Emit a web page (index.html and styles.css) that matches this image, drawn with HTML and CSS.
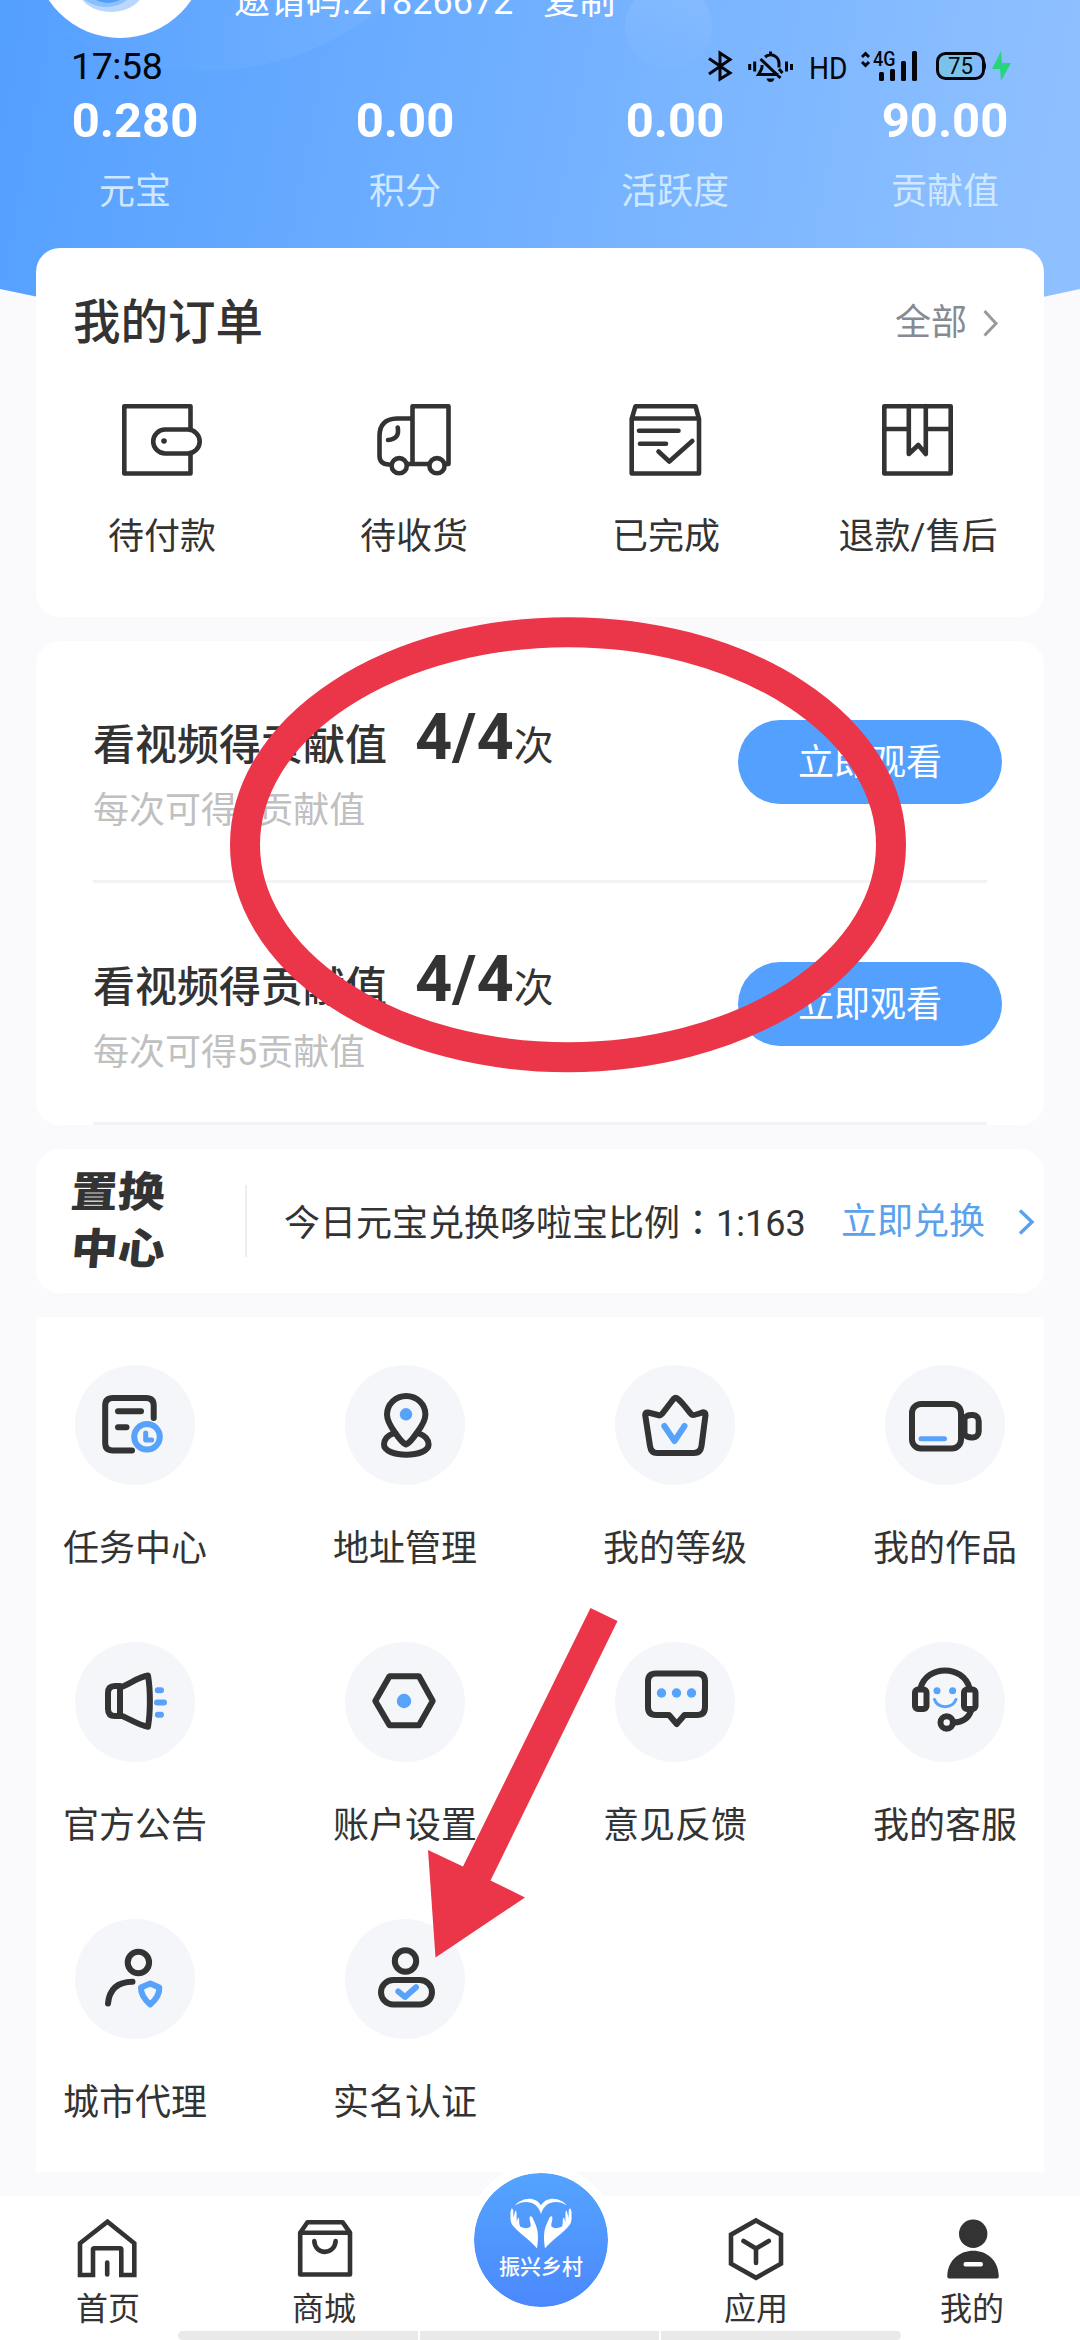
FILE: index.html
```html
<!DOCTYPE html>
<html lang="zh-CN">
<head>
<meta charset="utf-8">
<title>我的</title>
<link rel="stylesheet" href="styles.css">
</head>
<body>
<div class="page">
  <svg class="header-bg" viewBox="0 0 1080 360" aria-hidden="true">
    <defs>
      <linearGradient id="sky" x1="0" y1="0" x2="1" y2="0.06">
        <stop offset="0" stop-color="#54a0ff"/><stop offset="1" stop-color="#8ec0ff"/>
      </linearGradient>
      <linearGradient id="haze" x1="0" y1="0" x2="1" y2="0">
        <stop offset="0.2" stop-color="#fff" stop-opacity="0"/><stop offset="1" stop-color="#fff" stop-opacity="0.08"/>
      </linearGradient>
      <linearGradient id="bubble" x1="0" y1="0" x2="0" y2="1">
        <stop offset="0" stop-color="#fff" stop-opacity="0.1"/><stop offset="1" stop-color="#fff" stop-opacity="0.01"/>
      </linearGradient>
    </defs>
    <path fill="url(#sky)" d="M0 0H1080V289Q540 409 0 289Z"/>
    <circle fill="url(#haze)" cx="203" cy="-213" r="284"/>
    <circle fill="url(#bubble)" cx="668.5" cy="27" r="43.5"/>
    <circle fill="#fff" cx="120" cy="-48" r="86"/>
    <ellipse fill="#b9d8fc" cx="111" cy="-12" rx="33" ry="24"/>
    <ellipse fill="#8cc0fc" cx="106" cy="-15" rx="29" ry="22"/>
    <ellipse fill="#549ff6" cx="108" cy="-16" rx="22" ry="19"/>
  </svg>

  <div class="status-bar">
    <span class="clock">17:58</span>
    <svg class="status-icons" width="310" height="40" viewBox="705 46 310 40">
      <path class="st" d="M709 58.5L730 73L720 79V53L730 59.5L709 74"/>
      <g class="st">
        <path d="M749.7 64v6M754.7 61.500v10M786.500 61.500v10M791.500 64v6M770.500 51.500v3M765 57q4-3.500 9-1.500q5 2.500 5 8v4M762 65v2q0 2-3.500 7.500h20M760.500 59l20 19M779 69l3.500 4"/>
      </g>
      <path d="M766.500 78.500h8q-1 3.500-4 3.500t-4-3.500z"/>
      <text x="809" y="78.500" font-size="32" textLength="38.500" lengthAdjust="spacingAndGlyphs">HD</text>
      <path class="st" d="M862 57l3.500-3.500L869 57M862 62l3.500 3.500L869 62"/>
      <text x="873" y="66" font-size="20" font-weight="500" textLength="22.500" lengthAdjust="spacingAndGlyphs">4G</text>
      <rect x="879" y="72" width="5" height="9" rx="1.500"/><rect x="890" y="69" width="5" height="12" rx="1.500"/>
      <rect x="901" y="61" width="5" height="20" rx="1.500"/><rect x="912" y="51" width="5" height="30" rx="1.500"/>
      <rect x="937.500" y="53.500" width="46" height="25" rx="8" fill="#83baff"/>
      <path fill="#7bc2ea" d="M945 53.500h29v25h-29q-7 0-7-7v-11q0-7 7-7z"/>
      <rect class="st" x="937.500" y="53.500" width="46" height="25" rx="8"/>
      <path d="M984 61q2 1 2 5t-2 5z"/>
      <text x="948" y="74" font-size="23.500" textLength="25" lengthAdjust="spacingAndGlyphs">75</text>
      <path fill="#2ad47f" d="M1001 51L992 69h8l1 12L1011 63h-9z"/>
    </svg>
  </div>

  <header class="header">
    <div class="invite"><span>邀请码.21826672</span><span>复制</span></div>
    <div class="stats">
      <div class="stat"><b>0.280</b><span>元宝</span></div>
      <div class="stat"><b>0.00</b><span>积分</span></div>
      <div class="stat"><b>0.00</b><span>活跃度</span></div>
      <div class="stat"><b>90.00</b><span>贡献值</span></div>
    </div>
  </header>

  <main class="content">
    <section class="card orders">
      <div class="orders-head">
        <h2>我的订单</h2>
        <a class="all">全部<svg width="18" height="30" viewBox="981 306 18 30"><path d="M984.500 309L996 321.500L984.500 333.500"/></svg></a>
      </div>
      <div class="orders-list">
        <div class="order">
          <svg class="ico thin" viewBox="120 398 84 84"><path d="M190.500 429V406.200H124.300V473.500H190.500V454"/><rect x="153.200" y="429.500" width="46.500" height="24" rx="12"/><circle class="fill" cx="164" cy="441" r="2.800"/></svg>
          <span>待付款</span>
        </div>
        <div class="order">
          <svg class="ico thin" viewBox="372 398 84 84"><path d="M412.500 463V406.200H448.500V464H446M412.500 418.500H397Q379.500 419 379.500 436V456Q379.500 464 389 464.500M408.500 464H428M397.700 427.500Q400 439 388 440"/><circle cx="399.200" cy="465.700" r="7.600"/><circle cx="437" cy="465.700" r="7.600"/></svg>
          <span>待收货</span>
        </div>
        <div class="order">
          <svg class="ico thin" viewBox="624 398 84 84"><path d="M631.700 419L635.500 406.200H695.500L699 419M631.700 418.500H699V473.500H631.700ZM639 430.700H678.500M640 443.700H666M658.500 451.500L669.300 461.500L692.300 441"/></svg>
          <span>已完成</span>
        </div>
        <div class="order">
          <svg class="ico thin" viewBox="876 398 84 84"><path d="M884.300 406.200H950.700V473.500H884.300ZM884.300 429H908.800M925.800 429H950.700M908.800 406V454L918.300 445L925.800 454V406"/></svg>
          <span>退款/售后</span>
        </div>
      </div>
    </section>

    <section class="card videos">
      <div class="video">
        <div class="video-text">
          <p class="video-title">看视频得贡献值<b>4/4</b><span>次</span></p>
          <p class="video-sub">每次可得5贡献值</p>
        </div>
        <button class="watch">立即观看</button>
      </div>
      <div class="video">
        <div class="video-text">
          <p class="video-title">看视频得贡献值<b>4/4</b><span>次</span></p>
          <p class="video-sub">每次可得5贡献值</p>
        </div>
        <button class="watch">立即观看</button>
      </div>
    </section>

    <section class="card exchange">
      <div class="exchange-logo"><span>置换</span><span>中心</span></div>
      <p class="rate">今日元宝兑换哆啦宝比例<span class="colon" lang="zh-TW">：</span>1:163</p>
      <a class="swap">立即兑换<svg width="20" height="30" viewBox="1016 1207 20 30"><path d="M1020 1210.500L1032 1222L1020 1233.500"/></svg></a>
    </section>

    <section class="services">
      <div class="service">
        <div class="disc"><svg class="ico" viewBox="75 1365 120 120"><path d="M132 1450.500H113Q105.200 1450.500 105.200 1443V1405.500Q105.200 1398 113 1398H146Q153.700 1398 153.700 1405.500V1418M118 1411.300H141M118 1427.200H126.500"/><circle class="blue" cx="147" cy="1436.800" r="12.800"/><path class="blue mid" d="M145.700 1433V1440H151.700"/></svg></div>
        <span>任务中心</span>
      </div>
      <div class="service">
        <div class="disc"><svg class="ico" viewBox="345 1365 120 120"><path d="M406 1444.500Q402 1443 395 1432.500Q387 1421.500 387 1414.500A19.200 18.500 0 0 1 425.400 1414.500Q425.400 1421.500 417 1432.500Q410 1443 406 1444.500ZM393 1433.500Q384 1437 384 1444.500C384 1458 428.600 1458 428.600 1444.500Q428.600 1437 419 1433.500"/><circle class="bluefill" cx="406" cy="1414.300" r="6.200"/></svg></div>
        <span>地址管理</span>
      </div>
      <div class="service">
        <div class="disc"><svg class="ico" viewBox="615 1365 120 120"><path d="M673.500 1399Q675.700 1397 678 1399C684 1404 688 1411 692 1415Q693 1416 703 1412.300Q705.500 1412 705.500 1415L701.500 1446Q700.500 1453 694 1453H657Q651 1453 650 1446L645.200 1415Q645 1412 648 1412.500L658 1415Q660 1416 662 1414Z"/><path class="blue" d="M664.300 1426L674.500 1441L684.500 1426"/></svg></div>
        <span>我的等级</span>
      </div>
      <div class="service">
        <div class="disc"><svg class="ico" viewBox="885 1365 120 120"><rect x="912" y="1404" width="49" height="44.500" rx="9"/><path d="M964.500 1418C968 1413.500 978.700 1413.500 978.700 1421V1431.500C978.700 1439.500 968 1438.500 964.500 1434.500Z"/><path class="blue mid" d="M921 1438.700H944.500"/></svg></div>
        <span>我的作品</span>
      </div>
      <div class="service">
        <div class="disc"><svg class="ico" viewBox="75 1642 120 120"><path d="M120 1686H115Q108 1686 108 1693V1709Q108 1716 115 1716H120ZM120 1687.500C130 1684 138 1677 148 1675.500C150.500 1690 150.500 1712 148 1726.800C138 1725 130 1719 120 1715"/><path class="blue" d="M157.800 1690.200H161M157 1702.500H164M157.800 1714.800H161"/></svg></div>
        <span>官方公告</span>
      </div>
      <div class="service">
        <div class="disc"><svg class="ico" viewBox="345 1642 120 120"><path d="M389.500 1676.300H419L432.700 1701L419 1725.300H389.500L375.300 1701Z"/><circle class="bluefill" cx="404" cy="1701" r="7.200"/></svg></div>
        <span>账户设置</span>
      </div>
      <div class="service">
        <div class="disc"><svg class="ico" viewBox="615 1642 120 120"><path d="M656 1673.500H697Q705 1673.500 705 1681.500V1707Q705 1715 697 1715H684.500L676.700 1724L669 1715H656Q648 1715 648 1707V1681.500Q648 1673.500 656 1673.500Z"/><g class="bluefill"><circle cx="661.500" cy="1693" r="4.700"/><circle cx="676.500" cy="1693" r="4.700"/><circle cx="691.500" cy="1693" r="4.700"/></g></svg></div>
        <span>意见反馈</span>
      </div>
      <div class="service">
        <div class="disc"><svg class="ico" viewBox="885 1642 120 120"><path d="M920.500 1688C927 1664.500 963 1664.500 969.500 1688M971 1711Q967 1722 954 1722.500"/><rect x="915" y="1689.500" width="11.500" height="19.500" rx="3"/><rect x="964" y="1689.500" width="11.500" height="19.500" rx="3"/><circle cx="946.700" cy="1722.500" r="6.200"/><g class="bluefill"><circle cx="937" cy="1690.700" r="3.500"/><circle cx="952.600" cy="1690.700" r="3.500"/></g><path class="blue fine" d="M934.500 1699.500C938 1709 952 1709 956 1699.500"/></svg></div>
        <span>我的客服</span>
      </div>
      <div class="service">
        <div class="disc"><svg class="ico" viewBox="75 1919 120 120"><circle cx="138.400" cy="1962.500" r="10.700"/><path d="M108 2003.500Q110 1982 132.500 1981.700"/><path class="blue" d="M150.200 1983.500L159.300 1987.500Q160 1996 150.200 2004.500Q140.500 1996 141 1987.500Z"/></svg></div>
        <span>城市代理</span>
      </div>
      <div class="service">
        <div class="disc"><svg class="ico" viewBox="345 1919 120 120"><circle cx="405.500" cy="1961" r="10.700"/><rect x="381" y="1980" width="51" height="24.500" rx="12.200"/><path class="blue" d="M398.300 1991.500L405 1997L416 1987.300"/></svg></div>
        <span>实名认证</span>
      </div>
    </section>
  </main>

  <nav class="tabs">
    <a class="tab">
      <svg class="ico thin miter" viewBox="72 2214 72 68"><path d="M80 2275V2243.300L107.500 2221.700L134.300 2243.300V2275H121.300V2249.500Q121.300 2248.200 120 2248.200H94.500Q93 2248.200 93 2249.500V2275Z"/><path class="round" d="M107.200 2262.500V2274.500"/></svg>
      <span>首页</span>
    </a>
    <a class="tab">
      <svg class="ico thin" viewBox="288 2214 72 68"><path d="M300.200 2232.700L307.500 2222.200H342.500L350 2232.700V2274.500H300.200ZM300.200 2232.700H350M314.300 2241C315 2255.500 334.500 2255.500 335.700 2241"/></svg>
      <span>商城</span>
    </a>
    <a class="tab tab-center">
      <div class="village">
        <svg width="68" height="54" viewBox="0 0 68 54" fill="#fff">
          <path d="M8 8.500C14 1 28-2 34 8.500C40-2 54 1 60 8.500C50 2.500 38 4 34 17C30 4 18 2.500 8 8.500Z"/>
          <path id="hand" d="M4.500 11.500Q6.300 11 6.300 15L6.500 21L8.300 13.500Q10 14 9.500 19L9.700 25L11 20.500Q12.600 21 12.200 26L13 29.500Q20 33 23.500 29.500C24.500 27 21.500 22 23 19.500Q25 18.500 26.500 23C30 30 32.500 36 30 51.500C25 45 16 39 8 31Q2.500 26 3.500 19Q3 14 4.500 11.500Z"/>
          <use href="#hand" transform="matrix(-1 0 0 1 68 0)"/>
        </svg>
        <span>振兴乡村</span>
      </div>
    </a>
    <a class="tab">
      <svg class="ico thin miter" viewBox="720 2214 72 68"><path d="M756 2220.500L781 2234.700V2263.700L756 2277.800L731 2263.700V2234.700Z"/><path class="round" d="M743.500 2241L756 2248.500L768.800 2241M756 2248.500V2263"/></svg>
      <span>应用</span>
    </a>
    <a class="tab">
      <svg class="ico solid" viewBox="936 2214 72 68"><circle cx="973.200" cy="2233.700" r="14.200"/><path fill-rule="evenodd" d="M949 2278.500Q947.300 2278.500 947.300 2276.500C948 2242 998.500 2242 998.800 2276.500Q998.800 2278.500 997 2278.500ZM965.500 2262Q963.500 2262 963.500 2264.300T965.500 2266.500H981Q983 2266.500 983 2264.300T981 2262Z"/></svg>
      <span>我的</span>
    </a>
  </nav>
  <div class="gesture"><i></i><i></i><i></i></div>

  <svg class="marks" viewBox="0 0 1080 2340" aria-hidden="true">
    <ellipse cx="568" cy="844.700" rx="323" ry="212.500" fill="none" stroke="#eb3649" stroke-width="30"/>
    <path fill="#eb3649" d="M590.500 1608L617.500 1621L490.500 1880.500L525 1897.500L435.500 1957.500L428 1850L463 1866.500Z"/>
  </svg>
</div>
</body>
</html>
```

FILE: styles.css
```css
* { box-sizing: border-box; margin: 0; padding: 0; }

body {
  font-family: Roboto, "Noto Sans CJK SC", sans-serif;
  color: #333;
  background: #fafafc;
}

.page {
  position: relative;
  width: 1080px;
  height: 2340px;
  overflow: hidden;
  display: flex;
  flex-direction: column;
}

/* header */
.header-bg { position: absolute; left: 0; top: 0; width: 1080px; height: 360px; }

.status-bar {
  position: absolute;
  left: 0;
  top: 46px;
  width: 1080px;
  height: 40px;
  padding: 0 65px 0 71px;
  display: flex;
  justify-content: space-between;
  align-items: center;
  color: #04060c;
}
.clock { font-size: 37.5px; line-height: 40px; letter-spacing: -0.4px; }
.status-icons { fill: #04060c; }
.status-icons .st { fill: none; stroke: #04060c; stroke-width: 3; }

.header {
  position: relative;
  height: 248px;
  color: #fff;
}
.invite {
  display: flex;
  gap: 30px;
  height: 82px;
  padding-left: 234px;
  font-size: 36px;
  line-height: 40px;
  margin-top: -18px;
}
.stats { display: grid; grid-template-columns: repeat(4, 1fr); padding-top: 28px; }
.stat { display: flex; flex-direction: column; align-items: center; }
.stat b { font-size: 49px; line-height: 58px; }
.stat span { font-size: 36px; line-height: 40px; margin-top: 22px; color: #d0e8ff; }

/* cards */
.content {
  position: relative;
  display: flex;
  flex-direction: column;
  gap: 24px;
  padding: 0 36px;
}
.card { background: #fff; border-radius: 24px; }

.ico { fill: none; stroke: #333; stroke-width: 6; stroke-linecap: round; stroke-linejoin: round; display: block; }
.ico.thin { stroke-width: 4.6; }
.ico.miter { stroke-linecap: butt; stroke-linejoin: miter; }
.ico.solid { fill: #333; stroke: none; }
.ico .round { stroke-linecap: round; }
.ico .fill { fill: #333; stroke: none; }
.ico .blue { stroke: #57a2fb; }
.ico .mid { stroke-width: 5; }
.ico .fine { stroke-width: 3; }
.ico .bluefill { fill: #57a2fb; stroke: none; }

.orders { height: 369px; }
.orders-head {
  display: flex;
  justify-content: space-between;
  align-items: center;
  padding: 51px 45px 0 37px;
}
.orders-head h2 { font-size: 47.5px; font-weight: 500; line-height: 48px; }
.all { display: flex; align-items: center; gap: 14px; font-size: 36px; line-height: 48px; color: #868b93; }
.all svg { fill: none; stroke: #999; stroke-width: 3; margin-top: -1px; }
.orders-list { display: grid; grid-template-columns: repeat(4, 1fr); padding-top: 51px; }
.order { display: flex; flex-direction: column; align-items: center; gap: 35px; }
.order .ico { width: 84px; height: 84px; }
.order span { font-size: 36px; line-height: 40px; }

.video {
  display: flex;
  justify-content: space-between;
  height: 242px;
  margin: 0 57px;
  border-bottom: 3px solid #f3f3f4;
}
.video-text { padding-top: 65px; }
.video-title { font-size: 42px; font-weight: 500; line-height: 80px; height: 80px; white-space: nowrap; }
.video-title b { font-size: 65px; line-height: 60px; margin-left: 28px; position: relative; top: -1px; }
.video-title span { font-size: 40px; font-weight: 400; }
.video-sub { font-size: 36px; line-height: 40px; margin-top: 5px; color: #c0c0c0; }
.watch {
  width: 264px;
  height: 84px;
  margin: 79px -15px 0 0;
  padding-top: 2px;
  border: 0;
  border-radius: 42px;
  background: #54a0ff;
  color: #fff;
  font: 36px/82px Roboto, "Noto Sans CJK SC", sans-serif;
}

.exchange { height: 144px; display: flex; align-items: center; }
.exchange-logo {
  width: 211px;
  height: 72px;
  padding-left: 35px;
  border-right: 2px solid #eee;
  display: flex;
  flex-direction: column;
  justify-content: center;
  font-size: 47px;
  font-weight: 900;
  line-height: 57px;
}
.exchange-logo span { width: 96px; transform: skewX(-5deg) scaleY(0.9); }
.rate { font-size: 36px; line-height: 48px; margin-left: 37px; padding-top: 2px; white-space: nowrap; }
.colon { font-family: "Noto Sans CJK TC", sans-serif; }
.swap { display: flex; align-items: center; gap: 31px; margin-left: auto; margin-right: 8px; padding-top: 2px; font-size: 36px; line-height: 48px; color: #5aa1ee; }
.swap svg { fill: none; stroke: #5aa1ee; stroke-width: 3.4; margin-top: -1px; }

.services {
  background: #fff;
  height: 855px;
  display: grid;
  grid-template-columns: repeat(4, 270px);
  grid-auto-rows: 277px;
  justify-content: center;
  padding-top: 48px;
}
.service { display: flex; flex-direction: column; align-items: center; gap: 44px; }
.disc { width: 120px; height: 120px; border-radius: 50%; background: #f5f6f9; }
.disc .ico { width: 120px; height: 120px; }
.service span { font-size: 36px; line-height: 40px; }

/* bottom tabs */
.tabs {
  position: relative;
  margin-top: 24px;
  height: 135px;
  background: #fff;
  display: grid;
  grid-template-columns: repeat(5, 216px);
}
.tab { display: flex; flex-direction: column; align-items: center; padding-top: 18px; }
.tab .ico { width: 72px; height: 68px; }
.tab > span { font-size: 32px; line-height: 36px; margin-top: 9px; }
.tab-center { padding-top: 0; }
.village {
  width: 152px;
  height: 152px;
  margin: -32px -2px 0 0;
  border: 9px solid #fff;
  border-radius: 50%;
  background: linear-gradient(#54a4ff, #4b88fc) padding-box;
  color: #fff;
  flex: none;
  display: flex;
  flex-direction: column;
  align-items: center;
  padding-top: 24px;
}
.village span { font-size: 21px; font-weight: 500; line-height: 24px; margin-top: 4px; }

.gesture {
  position: relative;
  flex: none;
  height: 9px;
  background: #fff;
  display: flex;
  gap: 2px;
  padding: 0 179px 0 178px;
}
.gesture i { flex: 1; background: #e9e9e9; }
.gesture i:first-child { border-radius: 5px 0 0 5px; }
.gesture i:last-child { border-radius: 0 5px 5px 0; }

.marks { position: absolute; left: 0; top: 0; width: 1080px; height: 2340px; }
```
